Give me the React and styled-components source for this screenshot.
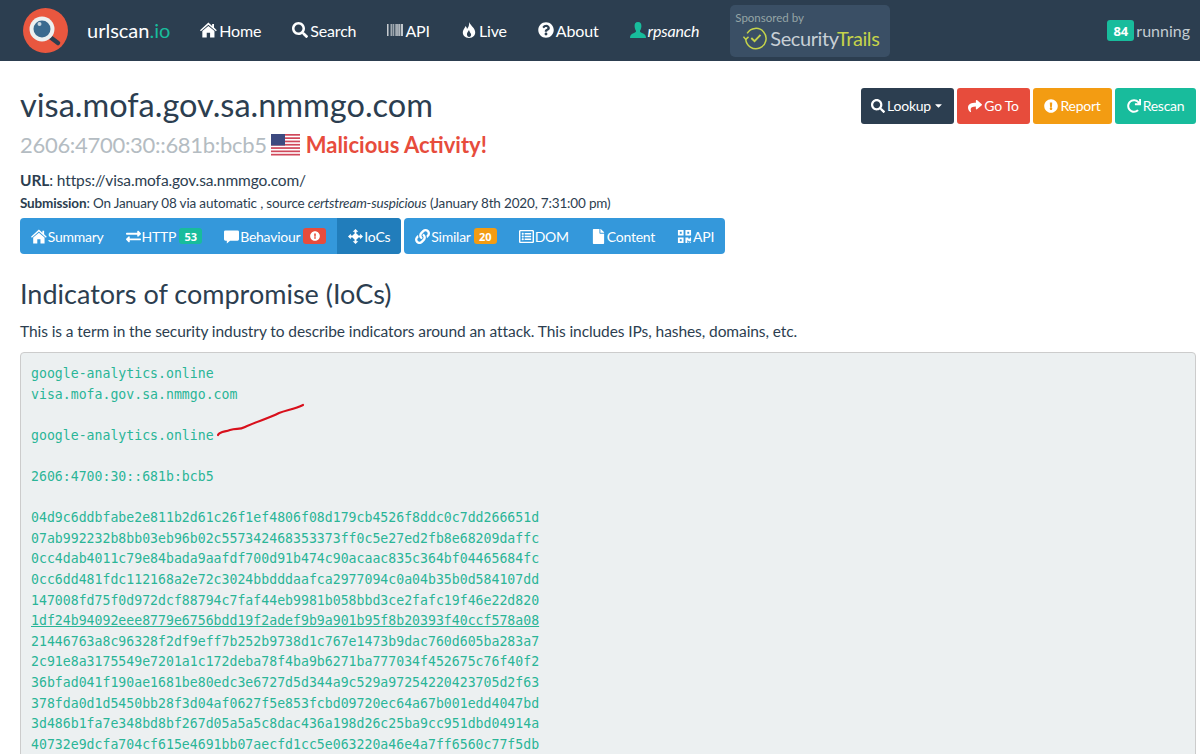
import React from 'react';
import styled, { createGlobalStyle } from 'styled-components';
import {
    FaSearch, FaBarcode, FaQuestionCircle, FaShare, FaExclamationCircle,
    FaRedo, FaExchangeAlt, FaLink, FaFile, FaQrcode, FaCaretDown, FaRegListAlt
} from 'react-icons/fa';

const GlobalStyle = createGlobalStyle`
    html, body {
        margin: 0;
        padding: 0;
        height: 754px;
        overflow: hidden;
        background: #fff;
        font-family: Lato, "Liberation Sans", sans-serif;
        color: #2c3e50;
    }
`;

const Header = styled.header`
    height: 61px;
    box-sizing: border-box;
    background: #2c3e50;
    display: flex;
    align-items: center;
    padding: 0 10px 1px 23px;
`;
const Brand = styled.div`
    font-size: 20px;
    color: #fff;
    margin-left: 19px;
    margin-right: 30px;
    span { color: #18bc9c; }
`;
const Nav = styled.nav`
    display: flex;
    align-items: center;
    gap: 31px;
`;
const NavItem = styled.div`
    display: flex;
    align-items: center;
    gap: 2px;
    font-size: 16px;
    letter-spacing: -0.15px;
    color: #fff;
    font-style: ${props => props.$italic ? 'italic' : 'normal'};
    svg {
        color: ${props => props.$iconColor || '#fff'};
        font-size: 16px;
    }
`;
const Sponsor = styled.div`
    width: 160px;
    height: 52px;
    margin-top: 1px;
    box-sizing: border-box;
    background: #3a4f65;
    border-radius: 5px;
    padding: 5px 5px 0;
    color: #95a5a6;
    font-size: 11.5px;
    line-height: 15px;
`;
const SponsorLogo = styled.div`
    display: flex;
    align-items: center;
    gap: 3px;
    padding-left: 8px;
    font-size: 20px;
    letter-spacing: -0.4px;
    line-height: 26px;
    color: #c8d0d6;
    svg { flex: none; }
    span { color: #c5d34a; }
`;
const Running = styled.div`
    margin-left: auto;
    display: flex;
    align-items: center;
    gap: 2px;
    font-size: 16px;
    color: #c3ccd2;
`;
const Badge = styled.span`
    display: inline-flex;
    align-items: center;
    justify-content: center;
    flex: none;
    width: ${props => props.$width || 23}px;
    height: ${props => props.$height || 16}px;
    margin-left: ${props => props.$gap || 0}px;
    margin-top: ${props => props.$top || 0}px;
    background: ${props => props.$color};
    color: #fff;
    font-family: "Open Sans", sans-serif;
    font-weight: 700;
    font-size: ${props => props.$size || 11}px;
    letter-spacing: 0;
    border-radius: 3px;
    svg { font-size: 10px; }
`;
const Main = styled.main`
    padding: 0 4px 0 20px;
    position: relative;
`;
const TitleRow = styled.div`
    display: flex;
    justify-content: space-between;
    align-items: flex-start;
    padding-top: 27px;
`;
const Title = styled.h1`
    margin: -1px 0 0;
    font-size: 32.5px;
    line-height: 36px;
    font-weight: 400;
`;
const Actions = styled.div`
    display: flex;
    gap: 3px;
`;
const ActionButton = styled.button`
    height: 36px;
    width: ${props => props.$width}px;
    border: 0;
    border-radius: 3px;
    background: ${props => props.$color};
    color: #fff;
    font: 400 14px Lato, sans-serif;
    letter-spacing: -0.25px;
    display: flex;
    align-items: center;
    justify-content: center;
    gap: 2px;
    padding: 0 0 1px;
    svg { font-size: 14px; }
`;
const Caret = styled(FaCaretDown)`
    && { font-size: 11px; }
`;
const Subtitle = styled.div`
    display: flex;
    align-items: center;
    gap: 4px;
    margin-top: 3px;
    font-size: 22px;
    letter-spacing: -0.3px;
    line-height: 36px;
    color: #b4bcc2;
`;
const Malicious = styled.strong`
    margin-left: 2px;
    color: #e74c3c;
    font-weight: 700;
    letter-spacing: 0;
`;
const UrlLine = styled.div`
    margin-top: 6px;
    font-size: 15.5px;
    letter-spacing: -0.12px;
    line-height: 22px;
    b { font-weight: 700; }
`;
const SubmissionLine = styled.div`
    margin-top: 2px;
    font-size: 13.5px;
    letter-spacing: -0.16px;
    line-height: 20px;
    b { font-weight: 700; }
`;
const TabBar = styled.div`
    display: flex;
    gap: 3px;
    margin-top: 5px;
`;
const TabGroup = styled.div`
    display: flex;
    height: 36px;
    border-radius: 4px;
    overflow: hidden;
    background: #3498db;
`;
const Tab = styled.div`
    display: flex;
    align-items: center;
    gap: 1px;
    padding: 0 11px;
    font-size: 14px;
    letter-spacing: -0.25px;
    color: #fff;
    background: ${props => props.$active ? '#217dbb' : 'transparent'};
    > svg { font-size: 15px; }
`;
const Heading = styled.h2`
    margin: 22px 0 0;
    font-size: 27px;
    line-height: 36px;
    font-weight: 400;
`;
const Intro = styled.p`
    margin: 8px 0 0;
    font-size: 15.5px;
    letter-spacing: -0.08px;
    line-height: 22px;
`;
const CodeBox = styled.pre`
    margin: 10px 0 0;
    position: relative;
    box-sizing: border-box;
    height: 420px;
    overflow: hidden;
    padding: 11px 10px 10px;
    background: #ecf0f1;
    border: 1px solid #cccccc;
    border-radius: 4px;
    font-family: "DejaVu Sans Mono", "Liberation Mono", monospace;
    font-size: 13.2px;
    line-height: 20.6px;
    color: #2ab597;
`;
const CodeLine = styled.div`
    min-height: 20.6px;
    text-decoration: ${props => props.$underline ? 'underline' : 'none'};
`;
const Scribble = styled.svg`
    position: absolute;
    left: 196px;
    top: 50px;
`;

const Logo = () => (
    <svg width="45" height="45" viewBox="0 0 45 45">
        <circle cx="22.5" cy="22.5" r="22.5" fill="#e9573f" />
        <path d="M27 29 L35 35" stroke="#2c3e50" strokeWidth="4.5" strokeLinecap="round" />
        <circle cx="19" cy="21" r="12.5" fill="#ecf0f1" />
        <circle cx="19" cy="21" r="8.5" fill="#3b6a8f" />
        <circle cx="16.5" cy="16" r="2" fill="#c9d6df" />
    </svg>
);

const HomeIcon = () => (
    <svg width="1.05em" height="1em" viewBox="0 0 18 16" fill="currentColor">
        <path d="M9 0 L13 3.6 V1.5 H15 V5.4 L18 8.2 L17 9.3 L9 2.4 L1 9.3 L0 8.2 Z" />
        <path d="M9 3.6 L15.5 9.2 V16 H10.8 V11 H7.2 V16 H2.5 V9.2 Z" />
    </svg>
);

const UserIcon = () => (
    <svg width="1em" height="1em" viewBox="0 0 16 16" fill="currentColor">
        <path d="M8 0 C10.6 0 11.6 2 11.4 4.4 C11.2 6.8 10.4 8 10 8.8 C9.8 9.8 10.4 10.4 12 11 C14.5 12 16 13 16 16 H0 C0 13 1.5 12 4 11 C5.6 10.4 6.2 9.8 6 8.8 C5.6 8 4.8 6.8 4.6 4.4 C4.4 2 5.4 0 8 0 Z" />
    </svg>
);

const FireIcon = () => (
    <svg width="1em" height="1em" viewBox="0 0 16 16" fill="currentColor" fillRule="evenodd">
        <path d="M8 0 C9 3 13 5 14 9 C15 13 12 16 8 16 C4 16 1 13 2 9 C2.5 7 4 6 4.5 4 C5.5 5 6 6 6 7 C7.5 5 8.5 3 8 0 Z M8 8 C7 10 5.5 11 6 13 C6.3 14.3 7.2 15 8 15 C9.5 15 10.5 13.5 10 12 C9.7 11 8.5 10 8 8 Z" />
    </svg>
);

const CommentIcon = () => (
    <svg width="1em" height="1em" viewBox="0 0 16 16" fill="currentColor">
        <path d="M1.5 1.5 H14.5 A1.5 1.5 0 0 1 16 3 V11 A1.5 1.5 0 0 1 14.5 12.5 H6.5 L3 15.5 V12.5 H1.5 A1.5 1.5 0 0 1 0 11 V3 A1.5 1.5 0 0 1 1.5 1.5 Z" />
    </svg>
);

const MoveIcon = () => (
    <svg width="1em" height="1em" viewBox="0 0 16 16" fill="currentColor">
        <path d="M8 0 L11 3 H9 V7 H13 V5 L16 8 L13 11 V9 H9 V13 H11 L8 16 L5 13 H7 V9 H3 V11 L0 8 L3 5 V7 H7 V3 H5 Z" />
        <circle cx="8" cy="8" r="3" />
    </svg>
);

const TrailsIcon = () => (
    <svg width="24" height="24" viewBox="0 0 26 26" fill="none" stroke="#c5d34a" strokeWidth="1.6">
        <path d="M4.5 8 A11 11 0 1 1 3 14" />
        <path d="M0.5 11.5 L3 14.5 L6 11.8" />
        <path d="M9 13 L12.5 16.5 L19 9.5" strokeWidth="2" />
    </svg>
);

const Flag = () => (
    <svg width="29" height="22" viewBox="0 0 29 22">
        <rect width="29" height="22" fill="#fff" />
        {[0, 1, 2, 3, 4, 5, 6].map(i => <rect key={i} y={i * 3.3} width="29" height="1.7" fill="#d0485a" />)}
        <rect width="14" height="11.5" fill="#3d4a80" />
    </svg>
);

const hashes = [
    '04d9c6ddbfabe2e811b2d61c26f1ef4806f08d179cb4526f8ddc0c7dd266651d',
    '07ab992232b8bb03eb96b02c557342468353373ff0c5e27ed2fb8e68209daffc',
    '0cc4dab4011c79e84bada9aafdf700d91b474c90acaac835c364bf04465684fc',
    '0cc6dd481fdc112168a2e72c3024bbdddaafca2977094c0a04b35b0d584107dd',
    '147008fd75f0d972dcf88794c7faf44eb9981b058bbd3ce2fafc19f46e22d820',
    '1df24b94092eee8779e6756bdd19f2adef9b9a901b95f8b20393f40ccf578a08',
    '21446763a8c96328f2df9eff7b252b9738d1c767e1473b9dac760d605ba283a7',
    '2c91e8a3175549e7201a1c172deba78f4ba9b6271ba777034f452675c76f40f2',
    '36bfad041f190ae1681be80edc3e6727d5d344a9c529a97254220423705d2f63',
    '378fda0d1d5450bb28f3d04af0627f5e853fcbd09720ec64a67b001edd4047bd',
    '3d486b1fa7e348bd8bf267d05a5a5c8dac436a198d26c25ba9cc951dbd04914a',
    '40732e9dcfa704cf615e4691bb07aecfd1cc5e063220a46e4a7ff6560c77f5db'
];
const lines = [
    'google-analytics.online',
    'visa.mofa.gov.sa.nmmgo.com',
    '',
    'google-analytics.online',
    '',
    '2606:4700:30::681b:bcb5',
    '',
    ...hashes
];

const App = () => (
    <>
        <GlobalStyle />
        <Header>
            <Logo />
            <Brand>urlscan<span>.io</span></Brand>
            <Nav>
                <NavItem><HomeIcon />Home</NavItem>
                <NavItem><FaSearch />Search</NavItem>
                <NavItem><FaBarcode />API</NavItem>
                <NavItem><FireIcon />Live</NavItem>
                <NavItem><FaQuestionCircle />About</NavItem>
                <NavItem $italic $iconColor="#18bc9c"><UserIcon />rpsanch</NavItem>
                <Sponsor>
                    Sponsored by
                    <SponsorLogo>
                        <TrailsIcon />
                        <div>Security<span>Trails</span></div>
                    </SponsorLogo>
                </Sponsor>
            </Nav>
            <Running><Badge $color="#18bc9c" $size={13} $width={27} $height={21} $top={1}>84</Badge>running</Running>
        </Header>
        <Main>
            <TitleRow>
                <Title>visa.mofa.gov.sa.nmmgo.com</Title>
                <Actions>
                    <ActionButton $color="#2c3e50" $width={93}><FaSearch />Lookup<Caret /></ActionButton>
                    <ActionButton $color="#e74c3c" $width={73}><FaShare />Go To</ActionButton>
                    <ActionButton $color="#f39c12" $width={79}><FaExclamationCircle />Report</ActionButton>
                    <ActionButton $color="#18bc9c" $width={81}><FaRedo />Rescan</ActionButton>
                </Actions>
            </TitleRow>
            <Subtitle>2606:4700:30::681b:bcb5 <Flag /><Malicious>Malicious Activity!</Malicious></Subtitle>
            <UrlLine><b>URL</b>: https://visa.mofa.gov.sa.nmmgo.com/</UrlLine>
            <SubmissionLine>
                <b>Submission</b>: On January 08 via automatic , source <i>certstream-suspicious</i> (January 8th 2020, 7:31:00 pm)
            </SubmissionLine>
            <TabBar>
                <TabGroup>
                    <Tab><HomeIcon />Summary</Tab>
                    <Tab><FaExchangeAlt />HTTP<Badge $color="#18bc9c" $gap={2}>53</Badge></Tab>
                    <Tab><CommentIcon />Behaviour<Badge $color="#e74c3c" $gap={2}><FaExclamationCircle /></Badge></Tab>
                    <Tab $active><MoveIcon />IoCs</Tab>
                </TabGroup>
                <TabGroup>
                    <Tab><FaLink />Similar<Badge $color="#f39c12" $gap={2}>20</Badge></Tab>
                    <Tab><FaRegListAlt />DOM</Tab>
                    <Tab><FaFile />Content</Tab>
                    <Tab><FaQrcode />API</Tab>
                </TabGroup>
            </TabBar>
            <Heading>Indicators of compromise (IoCs)</Heading>
            <Intro>This is a term in the security industry to describe indicators around an attack. This includes IPs, hashes, domains, etc.</Intro>
            <CodeBox>
                {lines.map((line, i) => (
                    <CodeLine key={i} $underline={line.startsWith('1df24')}>{line}</CodeLine>
                ))}
                <Scribble width="90" height="36" viewBox="0 0 90 36" fill="none">
                    <path d="M1 32 C3 28 8 29 13 27 C20 25 22 27 28 24 C38 19 50 16 62 10 C70 7 78 6 86 2" stroke="#d8101c" strokeWidth="2.2" strokeLinecap="round" />
                </Scribble>
            </CodeBox>
        </Main>
    </>
);

export default App;
